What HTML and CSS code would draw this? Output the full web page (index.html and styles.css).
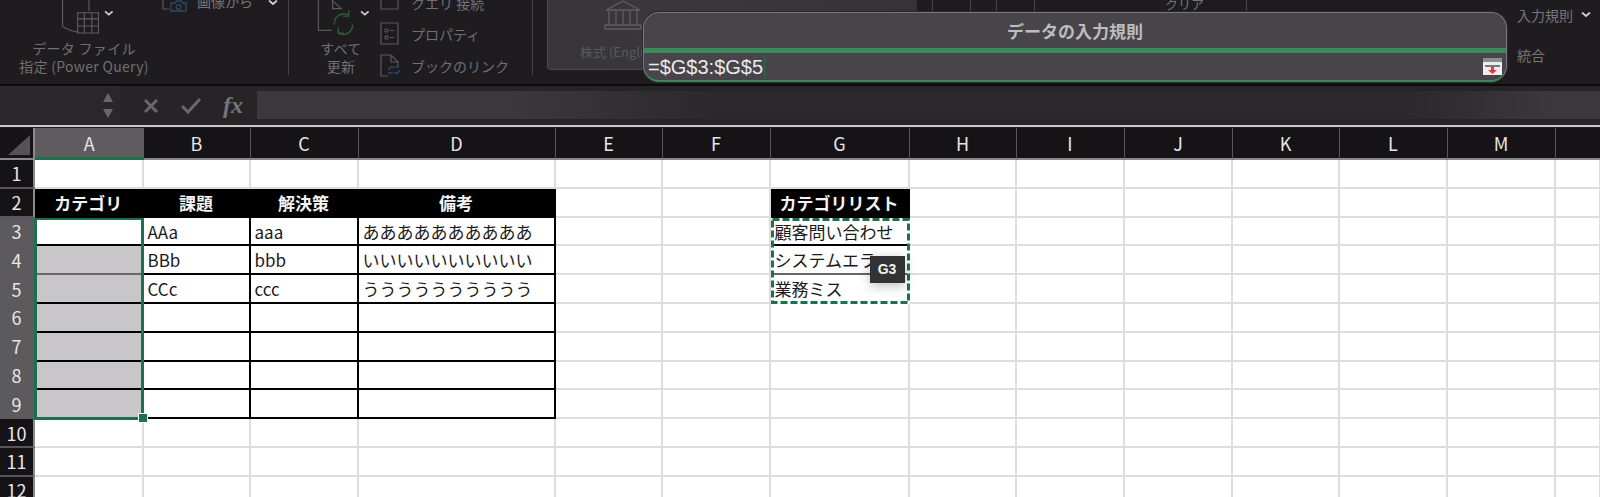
FILE: index.html
```html
<!DOCTYPE html>
<html lang="ja">
<head>
  <meta charset="utf-8">
  <title>データの入力規則</title>
  <link rel="stylesheet" href="styles.css">
</head>
<body>

<div class="chrome">

  <div class="ribbon">

    <div class="group group-data">
      <div class="big-button">
        <svg class="db-icon" width="60" height="36" viewBox="0 0 60 36" fill="none">
          <path d="M2 0V28Q10 33 19 34" stroke="#5a585c" stroke-width="1.3"/>
          <path d="M30 0V12" stroke="#5a585c" stroke-width="1.3"/>
          <path d="M18 13.5H40V35H18ZM18 20H40M18 27.5H40M25 13.5V35M33 13.5V35" stroke="#5f5d61" stroke-width="1.2"/>
          <path d="M47 12l4 3.5 4-3.5" stroke="#d0d0d0" stroke-width="1.8"/>
        </svg>
        <div class="big-label">データ ファイル<br>指定 (Power Query)</div>
      </div>
      <div class="image-from">
        <svg width="26" height="12" viewBox="0 0 26 12" fill="none">
          <path d="M1 0V9H7" stroke="#5a585c" stroke-width="1.2"/>
          <path d="M9 3H13L14.5 1H19L20.500 3H24V11H9Z" stroke="#2f4a63" stroke-width="1.3"/>
          <circle cx="16.500" cy="7" r="2.300" stroke="#2f4a63" stroke-width="1.2"/>
        </svg>
        <span>画像から</span>
        <svg width="10" height="6" viewBox="0 0 10 6" fill="none"><path d="M1 0.500l4 3.500 4-3.500" stroke="#d0d0d0" stroke-width="1.800"/></svg>
      </div>
    </div>

    <div class="group group-queries">
      <div class="big-button refresh">
        <svg width="58" height="38" viewBox="0 0 58 38" fill="none">
          <path d="M2 0V32H16M16 0L26 9H17V0" stroke="#5a585c" stroke-width="1.300"/>
          <path d="M19 26A10 10 0 0 1 34 16M38 26A10 10 0 0 1 23 35" stroke="#2f5b3c" stroke-width="1.500"/>
          <path d="M34 11V17H28M23 29V35H29" stroke="#2f5b3c" stroke-width="1.500"/>
          <path d="M47 12l4 3.500 4-3.500" stroke="#d0d0d0" stroke-width="1.800"/>
        </svg>
        <div class="big-label">すべて<br>更新</div>
      </div>
      <div class="query-list">
        <div class="query-item clipped">
          <svg width="20" height="10" viewBox="0 0 20 10" fill="none"><path d="M1 0V9H18V0" stroke="#5a585c" stroke-width="1.200"/></svg>
          <span>クエリ 接続</span>
        </div>
        <div class="query-item">
          <svg width="20" height="23" viewBox="0 0 20 23" fill="none">
            <path d="M1 1H18V22H1Z" stroke="#5a585c" stroke-width="1.200"/>
            <path d="M5 7H8V10H5ZM5 14H8V17H5ZM10 8.500H14M10 15.500H14" stroke="#5a585c"/>
          </svg>
          <span>プロパティ</span>
        </div>
        <div class="query-item">
          <svg width="20" height="23" viewBox="0 0 20 23" fill="none">
            <path d="M1 1H11L18 8V12M1 1V22H8M11 1V8H18" stroke="#5a585c" stroke-width="1.200"/>
            <path d="M9 16a3 3 0 0 1 3-3h2M19 16a3 3 0 0 1-3 3h-2M8 19h5M15 13h4" stroke="#2f4a63" stroke-width="1.500"/>
          </svg>
          <span>ブックのリンク</span>
        </div>
      </div>
    </div>

    <div class="types-box">
      <div class="stock">
        <svg width="40" height="30" viewBox="0 0 40 30" fill="none">
          <path d="M3 10L20 1L37 10ZM6 11V24M13 11V24M20 11V24M27 11V24M34 11V24M2 25H38V29H2Z" stroke="#5f5d61" stroke-width="1.300"/>
        </svg>
        <span>株式 (English)</span>
      </div>
    </div>

    <div class="tools-strip">
      <span class="strip-line first"></span>
      <span class="strip-line second"></span>
      <span class="strip-line third"></span>
      <span class="strip-line fourth"></span>
      <span class="strip-text">クリア</span>
      <span class="strip-line fifth"></span>
    </div>

    <div class="group-validate">
      <div class="validate-row">入力規則
        <svg width="10" height="6" viewBox="0 0 10 6" fill="none"><path d="M1 0.500l4 3.500 4-3.500" stroke="#d0d0d0" stroke-width="1.800"/></svg>
      </div>
      <div class="validate-row">統合</div>
    </div>

  </div>

  <div class="formula-bar">
    <div class="name-box">
      <span class="up-arrow"></span>
      <span class="down-arrow"></span>
    </div>
    <div class="formula-buttons">
      <svg width="16" height="16" viewBox="0 0 16 16" fill="none"><path d="M2 2L14 14M14 2L2 14" stroke="#69676b" stroke-width="3"/></svg>
      <svg width="22" height="18" viewBox="0 0 22 18" fill="none"><path d="M2 9L8 15L20 2" stroke="#69676b" stroke-width="3"/></svg>
      <span class="fx">fx</span>
    </div>
    <div class="formula-input"></div>
  </div>

  <div class="dialog">
    <div class="dialog-title">データの入力規則</div>
    <div class="dialog-field">
      <span class="range-text">=$G$3:$G$5</span>
      <svg class="picker" width="19" height="17" viewBox="0 0 19 17">
        <rect width="19" height="17" fill="#efeeef"/>
        <rect width="19" height="4" fill="#8c8b8e"/>
        <rect x="2" y="7" width="15" height="2" fill="#77767a"/>
        <path d="M8 9H11V12H14L9.500 16L5 12H8Z" fill="#e0353b"/>
      </svg>
    </div>
  </div>

</div>

<div class="sheet">

  <div class="col-head corner"><svg width="24" height="22" viewBox="0 0 24 22"><path d="M1 21L23 1V21Z" fill="#555356"/></svg></div>
  <div class="col-head active">A</div>
  <div class="col-head">B</div>
  <div class="col-head">C</div>
  <div class="col-head">D</div>
  <div class="col-head">E</div>
  <div class="col-head">F</div>
  <div class="col-head">G</div>
  <div class="col-head">H</div>
  <div class="col-head">I</div>
  <div class="col-head">J</div>
  <div class="col-head">K</div>
  <div class="col-head">L</div>
  <div class="col-head">M</div>
  <div class="col-head"></div>

  <div class="row-head">1</div>
  <div class="cell"></div><div class="cell"></div><div class="cell"></div><div class="cell"></div><div class="cell"></div><div class="cell"></div><div class="cell"></div><div class="cell"></div><div class="cell"></div><div class="cell"></div><div class="cell"></div><div class="cell"></div><div class="cell"></div><div class="cell"></div>

  <div class="row-head">2</div>
  <div class="cell title">カテゴリ</div><div class="cell title">課題</div><div class="cell title">解決策</div><div class="cell title">備考</div>
  <div class="cell"></div><div class="cell"></div>
  <div class="cell title">カテゴリリスト</div>
  <div class="cell"></div><div class="cell"></div><div class="cell"></div><div class="cell"></div><div class="cell"></div><div class="cell"></div><div class="cell"></div>

  <div class="row-head on">3</div>
  <div class="cell boxed anchor">
    <div class="selection"><span class="fill-handle"></span></div>
  </div>
  <div class="cell boxed">AAa</div><div class="cell boxed">aaa</div><div class="cell boxed">ああああああああああ</div>
  <div class="cell"></div><div class="cell"></div>
  <div class="cell boxed anchor">顧客問い合わせ
    <div class="copy-range">
      <svg class="ants" viewBox="0 0 139 86" preserveAspectRatio="none" fill="none">
        <rect x="1.500" y="1.500" width="136" height="83" stroke="#fff" stroke-width="3"/>
        <rect x="1.500" y="1.500" width="136" height="83" stroke="#1d6f4d" stroke-width="3" stroke-dasharray="7 3"/>
      </svg>
      <span class="range-tip">G3</span>
    </div>
  </div>
  <div class="cell"></div><div class="cell"></div><div class="cell"></div><div class="cell"></div><div class="cell"></div><div class="cell"></div><div class="cell"></div>

  <div class="row-head on">4</div>
  <div class="cell boxed soft picked"></div><div class="cell boxed">BBb</div><div class="cell boxed">bbb</div><div class="cell boxed">いいいいいいいいいい</div>
  <div class="cell"></div><div class="cell"></div>
  <div class="cell boxed soft">システムエラー</div>
  <div class="cell"></div><div class="cell"></div><div class="cell"></div><div class="cell"></div><div class="cell"></div><div class="cell"></div><div class="cell"></div>

  <div class="row-head on">5</div>
  <div class="cell boxed picked"></div><div class="cell boxed">CCc</div><div class="cell boxed">ccc</div><div class="cell boxed">うううううううううう</div>
  <div class="cell"></div><div class="cell"></div>
  <div class="cell">業務ミス</div>
  <div class="cell"></div><div class="cell"></div><div class="cell"></div><div class="cell"></div><div class="cell"></div><div class="cell"></div><div class="cell"></div>

  <div class="row-head on">6</div>
  <div class="cell boxed picked"></div><div class="cell boxed"></div><div class="cell boxed"></div><div class="cell boxed"></div>
  <div class="cell"></div><div class="cell"></div><div class="cell"></div><div class="cell"></div><div class="cell"></div><div class="cell"></div><div class="cell"></div><div class="cell"></div><div class="cell"></div><div class="cell"></div>

  <div class="row-head on">7</div>
  <div class="cell boxed picked"></div><div class="cell boxed"></div><div class="cell boxed"></div><div class="cell boxed"></div>
  <div class="cell"></div><div class="cell"></div><div class="cell"></div><div class="cell"></div><div class="cell"></div><div class="cell"></div><div class="cell"></div><div class="cell"></div><div class="cell"></div><div class="cell"></div>

  <div class="row-head on">8</div>
  <div class="cell boxed picked"></div><div class="cell boxed"></div><div class="cell boxed"></div><div class="cell boxed"></div>
  <div class="cell"></div><div class="cell"></div><div class="cell"></div><div class="cell"></div><div class="cell"></div><div class="cell"></div><div class="cell"></div><div class="cell"></div><div class="cell"></div><div class="cell"></div>

  <div class="row-head on">9</div>
  <div class="cell boxed picked"></div><div class="cell boxed"></div><div class="cell boxed"></div><div class="cell boxed"></div>
  <div class="cell"></div><div class="cell"></div><div class="cell"></div><div class="cell"></div><div class="cell"></div><div class="cell"></div><div class="cell"></div><div class="cell"></div><div class="cell"></div><div class="cell"></div>

  <div class="row-head">10</div>
  <div class="cell"></div><div class="cell"></div><div class="cell"></div><div class="cell"></div><div class="cell"></div><div class="cell"></div><div class="cell"></div><div class="cell"></div><div class="cell"></div><div class="cell"></div><div class="cell"></div><div class="cell"></div><div class="cell"></div><div class="cell"></div>

  <div class="row-head">11</div>
  <div class="cell"></div><div class="cell"></div><div class="cell"></div><div class="cell"></div><div class="cell"></div><div class="cell"></div><div class="cell"></div><div class="cell"></div><div class="cell"></div><div class="cell"></div><div class="cell"></div><div class="cell"></div><div class="cell"></div><div class="cell"></div>

  <div class="row-head">12</div>
  <div class="cell"></div><div class="cell"></div><div class="cell"></div><div class="cell"></div><div class="cell"></div><div class="cell"></div><div class="cell"></div><div class="cell"></div><div class="cell"></div><div class="cell"></div><div class="cell"></div><div class="cell"></div><div class="cell"></div><div class="cell"></div>

</div>

</body>
</html>
```

FILE: styles.css
```css
html, body {
  margin: 0;
  height: 497px;
  overflow: hidden;
  background: #fff;
  font-family: "Noto Sans CJK JP", "Liberation Sans", sans-serif;
}

.chrome {
  position: relative;
  height: 128px;
  overflow: hidden;
  background: #1e1c1f;
}

/* ribbon */

.ribbon {
  display: flex;
  height: 86px;
  box-sizing: border-box;
  border-bottom: 2px solid #0c0b0c;
  color: #716f74;
  font-size: 14px;
}

.group {
  display: flex;
  height: 75px;
  box-sizing: border-box;
  border-right: 1px solid #47454a;
}

.group-data {
  width: 289px;
  padding-left: 16px;
}

.group-queries {
  width: 244px;
  padding-left: 22px;
}

.big-button {
  display: flex;
  flex-direction: column;
  align-items: center;
}

.big-label {
  margin-top: 5px;
  line-height: 18px;
  letter-spacing: 0.3px;
  text-align: center;
  white-space: nowrap;
}

.group-data .big-button {
  width: 136px;
}

.db-icon {
  margin-left: 10px;
}

.image-from {
  display: flex;
  align-items: flex-start;
  gap: 9px;
  margin-left: 10px;
  height: 14px;
}

.image-from span {
  margin-top: -9px;
  line-height: 20px;
  color: #77757a;
}

.image-from svg:last-child {
  margin: 0 0 0 6px;
}

.refresh {
  width: 60px;
}

.refresh svg {
  margin-left: 6px;
}

.refresh .big-label {
  margin-top: 3px;
}

.query-list {
  margin-left: 9px;
}

.query-item {
  display: flex;
  align-items: center;
  gap: 11px;
  height: 23px;
  margin-bottom: 9px;
  white-space: nowrap;
}

.query-item.clipped {
  height: 10px;
  margin-bottom: 12px;
  align-items: flex-start;
}

.query-item.clipped span {
  margin-top: -6px;
  line-height: 18px;
}

.types-box {
  width: 370px;
  height: 70px;
  margin-left: 14px;
  border-radius: 0 0 4px 4px;
  border-bottom: 1px solid #4c4a4e;
  border-left: 1px solid #4c4a4e;
  box-sizing: border-box;
  background: linear-gradient(90deg, #373538, #3a383b 40%, #343235);
}

.stock {
  display: flex;
  flex-direction: column;
  align-items: center;
  width: 116px;
  margin-left: 15px;
  overflow: hidden;
  color: #5b595d;
  font-size: 13px;
  white-space: nowrap;
}

.stock span {
  margin-top: 13px;
  line-height: 18px;
}

.stock svg {
  margin-left: 4px;
}

.tools-strip {
  display: flex;
  width: 556px;
  height: 12px;
  align-items: flex-start;
}

.strip-line {
  width: 1px;
  height: 12px;
  background: #47454a;
}

.strip-line.first { margin-left: 15px; }
.strip-line.second { margin-left: 37px; }
.strip-line.third { margin-left: 25px; }
.strip-line.fourth { margin-left: 37px; }
.strip-line.fifth { margin-left: 42px; }

.strip-text {
  margin: -5px 0 0 130px;
  line-height: 18px;
  font-size: 13px;
  color: #77757a;
}

.group-validate {
  margin-left: 44px;
  padding-top: 5px;
  color: #77757a;
}

.validate-row {
  display: flex;
  align-items: center;
  gap: 8px;
  height: 20px;
  margin-bottom: 20px;
  white-space: nowrap;
}

/* formula bar */

.formula-bar {
  display: flex;
  height: 41px;
  box-sizing: border-box;
  background: #262427;
  border-bottom: 2px solid #c9c8ca;
}

.name-box {
  display: flex;
  flex-direction: column;
  align-items: flex-end;
  justify-content: center;
  gap: 7px;
  width: 120px;
  box-sizing: border-box;
  padding-right: 7px;
  background: #29272a;
}

.up-arrow, .down-arrow {
  width: 0;
  height: 0;
  border-left: 5px solid transparent;
  border-right: 5px solid transparent;
}

.up-arrow {
  border-bottom: 9px solid #69676b;
}

.down-arrow {
  border-top: 9px solid #69676b;
}

.formula-buttons {
  display: flex;
  align-items: center;
  gap: 21px;
  width: 137px;
  box-sizing: border-box;
  padding-left: 23px;
}

.fx {
  font-family: "Liberation Serif", serif;
  font-style: italic;
  font-weight: bold;
  font-size: 24px;
  color: #77757a;
}

.formula-input {
  flex: 1;
  height: 28px;
  margin-top: 5px;
  background: linear-gradient(90deg, #3b393c 18%, #2b292c 34%, #2b292c 86%, #3b393c 97%);
}

/* range dialog */

.dialog {
  position: absolute;
  left: 643px;
  top: 12px;
  width: 864px;
  height: 70px;
  box-sizing: border-box;
  border: 1px solid #77767a;
  border-bottom: 2px solid #3c8a5b;
  border-radius: 16px;
  overflow: hidden;
  background: #47454a;
  box-shadow: 0 0 0 1px #2a282b;
}

.dialog-title {
  height: 40px;
  box-sizing: border-box;
  border-bottom: 5px solid #3c8a5b;
  line-height: 36px;
  font-size: 17px;
  font-weight: bold;
  text-align: center;
  color: #bdbcbe;
}

.dialog-field {
  display: flex;
  align-items: center;
  justify-content: space-between;
  height: 27px;
  padding: 0 4px;
}

.range-text {
  padding-right: 1px;
  border-right: 1px solid #1d6f4d;
  line-height: 22px;
  font-family: "Liberation Sans", sans-serif;
  font-size: 20px;
  color: #eceaec;
}

/* sheet */

.sheet {
  display: grid;
  grid-template-columns: 35px 108.5px 107px 108px 197px 107px 108px 139px 107px 108px 108px 107px 108px 108px 45px;
  grid-template-rows: 32px repeat(12, 28.8px);
  color: #1b1a1b;
  font-size: 17px;
}

.col-head, .row-head {
  display: flex;
  align-items: center;
  justify-content: center;
  box-sizing: border-box;
  background: #151316;
  color: #e8e7e8;
  font-size: 18px;
}

.col-head {
  border-right: 1px solid #58565a;
  border-bottom: 2px solid #8a898c;
}

.col-head.active {
  background: #5e5c5f;
  border-bottom: 3px solid #1d6f4d;
  border-right: none;
}

.corner {
  align-items: flex-end;
  justify-content: flex-end;
  padding: 0 2px 2px 0;
  border-right: 2px solid #8a898c;
}

.row-head {
  border-right: 2px solid #8a898c;
  border-bottom: 2px solid #58565a;
}

.row-head.on {
  background: #5c5a5d;
  border-right-color: #5c5a5d;
  border-bottom-color: #5c5a5d;
}

.cell {
  box-sizing: border-box;
  padding-left: 4px;
  border-right: 2px solid #dedcde;
  border-bottom: 2px solid #dedcde;
  line-height: 27px;
  white-space: nowrap;
  overflow: hidden;
}

.cell.title {
  padding: 0;
  background: #000;
  border-color: #000;
  color: #f4f4f4;
  font-weight: bold;
  text-align: center;
}

.cell.boxed {
  border-right: 2px solid #000;
  border-bottom: 2px solid #000;
}

.cell.boxed.soft {
  border-bottom-color: #666;
}

.cell.picked {
  background: #c8c6c9;
}

/* selection and copy range hang off the top-left cell they cover */

.cell.anchor {
  position: relative;
  overflow: visible;
}

.selection {
  position: absolute;
  left: -1px;
  top: 0;
  width: 109.5px;
  height: 202px;
  box-sizing: border-box;
  border: 3px solid #1d6f4d;
  border-top-width: 2px;
}

.fill-handle {
  position: absolute;
  right: -7px;
  bottom: -6px;
  width: 8px;
  height: 8px;
  border: 1px solid #fff;
  background: #1d6f4d;
}

.copy-range {
  position: absolute;
  left: 0;
  top: 0;
  width: 139px;
  height: 86px;
}

.ants {
  display: block;
  width: 100%;
  height: 100%;
}

.range-tip {
  position: absolute;
  right: 5px;
  top: 38px;
  width: 35px;
  height: 27px;
  line-height: 27px;
  background: #333234;
  color: #f2f2f2;
  font-family: "Liberation Sans", sans-serif;
  font-size: 14px;
  font-weight: bold;
  text-align: center;
  box-shadow: 0 3px 12px rgba(0, 0, 0, 0.25);
}
```
